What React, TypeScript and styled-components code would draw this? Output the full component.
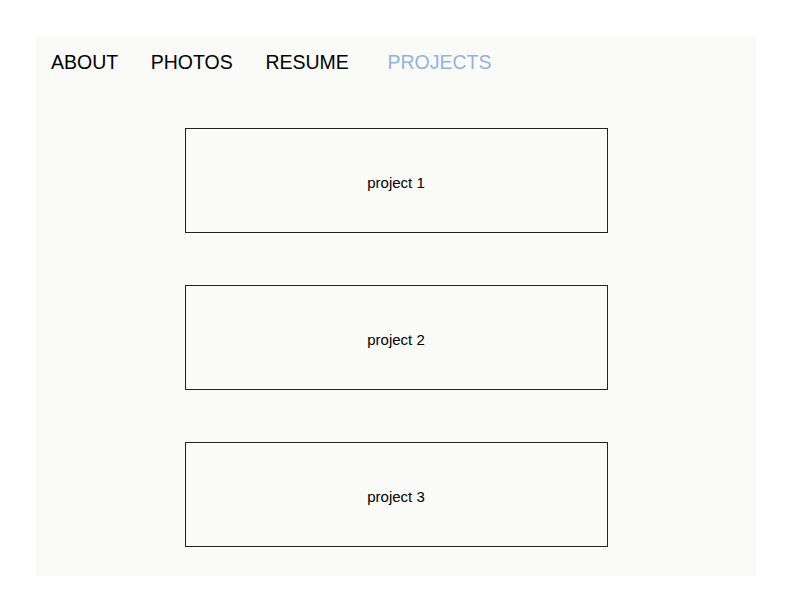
import styled, { createGlobalStyle } from "styled-components";

const navItems = ["ABOUT", "PHOTOS", "RESUME", "PROJECTS"];
const projects = ["project 1", "project 2", "project 3"];

const GlobalStyle = createGlobalStyle`
    html, body {
        margin: 0;
        padding: 0;
        background: #ffffff;
        font-family: "Liberation Sans", Arial, Helvetica, sans-serif;
    }
`;

export default function App() {
    const active = "PROJECTS";

    return (
        <Page>
            <GlobalStyle />
            <Panel>
                <Nav>
                    {navItems.map((item) => (
                        <NavLink key={item} $active={item === active}>
                            {item}
                        </NavLink>
                    ))}
                </Nav>

                <ProjectList>
                    {projects.map((p) => (
                        <ProjectCard key={p}>{p}</ProjectCard>
                    ))}
                </ProjectList>
            </Panel>
        </Page>
    );
}

const Page = styled.div`
    padding: 36px;
    box-sizing: border-box;
    width: 792px;
    height: 612px;
`;

const Panel = styled.div`
    height: 540px;
    box-sizing: border-box;
    background: #fafbf9;
    padding: 15px 15px 14px 15px;
`;

const Nav = styled.nav`
    display: flex;
    align-items: center;
    gap: 32.6px;
`;

const NavLink = styled.a<{ $active?: boolean }>`
    font-size: 19.5px;
    line-height: 23px;
    color: ${({ $active }) => ($active ? "#8fb4e0" : "#000000")};
    margin-left: ${({ $active }) => ($active ? "6px" : "0")};
    cursor: pointer;
    text-decoration: none;
`;

const ProjectList = styled.div`
    margin-top: 54px;
    display: flex;
    flex-direction: column;
    align-items: center;
    gap: 52px;
`;

const ProjectCard = styled.div`
    width: 423px;
    height: 105px;
    box-sizing: border-box;
    border: 1px solid #222;
    display: flex;
    align-items: center;
    justify-content: center;
    padding-top: 4px;
    font-size: 15px;
    color: #000;
`;
